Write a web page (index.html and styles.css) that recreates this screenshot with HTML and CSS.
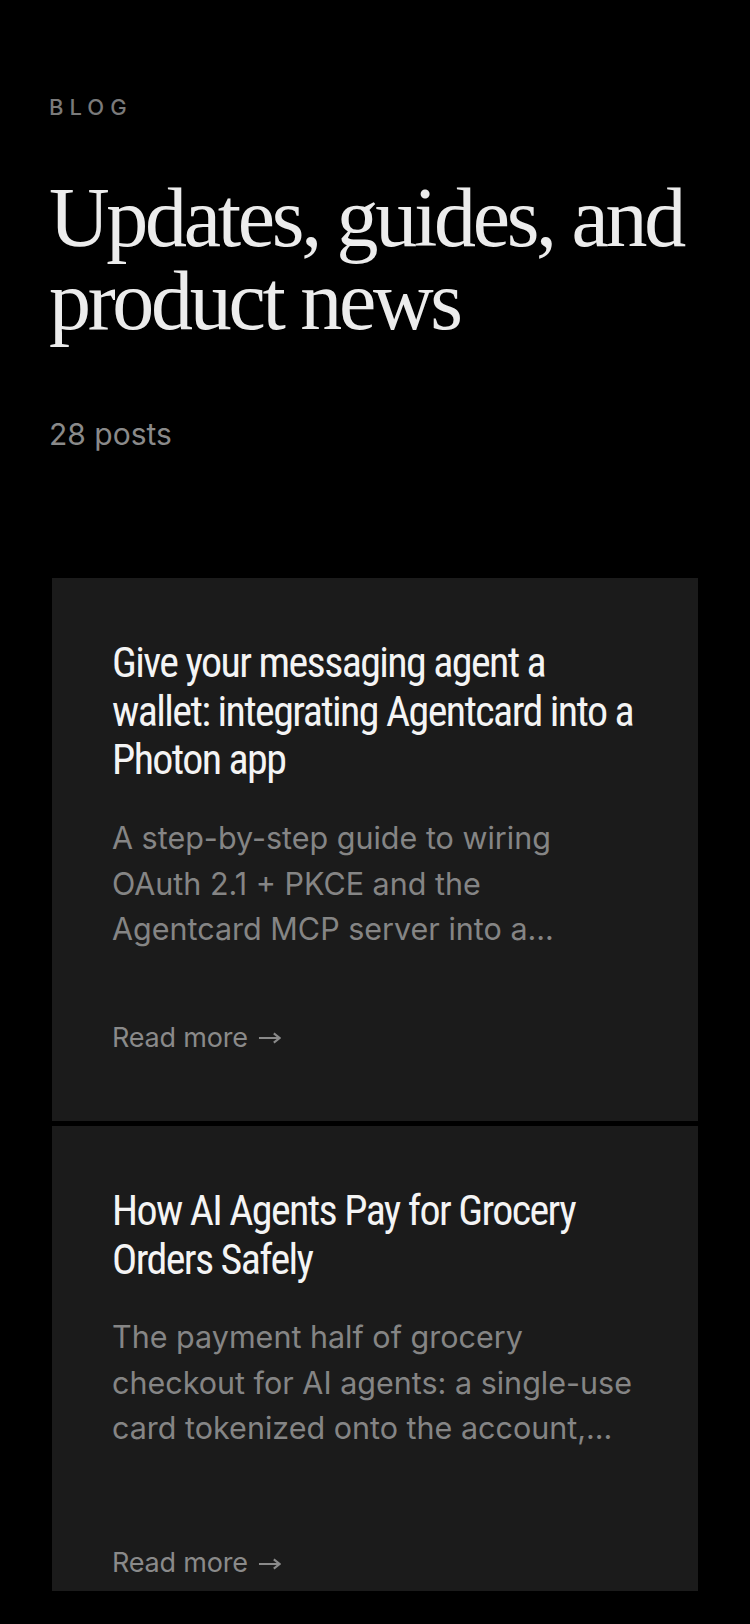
FILE: index.html
```html
<!DOCTYPE html>
<html lang="en">
<head>
<meta charset="utf-8">
<title>Blog</title>
<link rel="stylesheet" href="styles.css">
</head>
<body>
<main class="page">
  <header class="hero">
    <p class="eyebrow">BLOG</p>
    <h1 class="headline">Updates, guides, and product news</h1>
    <p class="count">28 posts</p>
  </header>
  <section class="posts">
    <article class="card">
      <h2 class="card-title">Give your messaging agent a wallet: integrating Agentcard into a Photon app</h2>
      <p class="card-desc">A step-by-step guide to wiring OAuth 2.1 + PKCE and the Agentcard MCP server into a...</p>
      <a class="read-more" href="#">Read more<svg class="arrow" viewBox="0 0 24 14" aria-hidden="true"><path d="M1 7H22.5M16.5 2.2L22.5 7L16.5 11.8"/></svg></a>
    </article>
    <article class="card card-short">
      <h2 class="card-title">How AI Agents Pay for Grocery Orders Safely</h2>
      <p class="card-desc">The payment half of grocery checkout for AI agents: a single-use card tokenized onto the account,...</p>
      <a class="read-more" href="#">Read more<svg class="arrow" viewBox="0 0 24 14" aria-hidden="true"><path d="M1 7H22.5M16.5 2.2L22.5 7L16.5 11.8"/></svg></a>
    </article>
  </section>
</main>
</body>
</html>
```
FILE: styles.css
```css
* { box-sizing: border-box; }
html, body { margin: 0; padding: 0; background: #000; }
body { font-family: "Inter", "Liberation Sans", sans-serif; color: #eee; }
.page { padding: 90px 52px 0 49px; height: 1624px; overflow: hidden; }
.eyebrow { margin: 0; font-size: 22px; letter-spacing: 6px; color: #7a7a7a; font-weight: 500; line-height: 34px; }
.headline {
  margin: 52px 0 0;
  font-family: "Liberation Serif", "DejaVu Serif", serif;
  font-weight: 400;
  font-size: 84px;
  line-height: 83px;
  letter-spacing: -3.3px;
  color: #ececec;
}
.count { margin: 72px 0 0; font-size: 30px; color: #8a8a8a; line-height: 40px; }
.posts { margin: 124px 0 0 3px; display: flex; flex-direction: column; gap: 5px; }
.card { background: #1b1b1b; padding: 61px 52px 66px 60px; }
.card-title {
  margin: 0;
  font-family: "Roboto Condensed", "Roboto", "Liberation Sans", sans-serif;
  font-weight: 400;
  font-size: 42px;
  line-height: 48.7px;
  letter-spacing: -1.6px;
  color: #f4f4f4;
}
.card-desc { margin: 30px 8px 0 0; font-size: 30.5px; line-height: 45.6px; color: #858585; }
.read-more {
  display: flex;
  align-items: center;
  gap: 10px;
  margin-top: 69px;
  font-family: "Inter", "Liberation Sans", sans-serif;
  font-size: 27px;
  line-height: 34px;
  color: #8a8a8a;
  text-decoration: none;
  letter-spacing: -0.2px;
}
.arrow { width: 23px; height: 14px; fill: none; stroke: currentColor; stroke-width: 2.2; margin-top: 1px; }
.card-short .read-more { margin-top: 95px; }
.card-short { padding-bottom: 11px; }
```
